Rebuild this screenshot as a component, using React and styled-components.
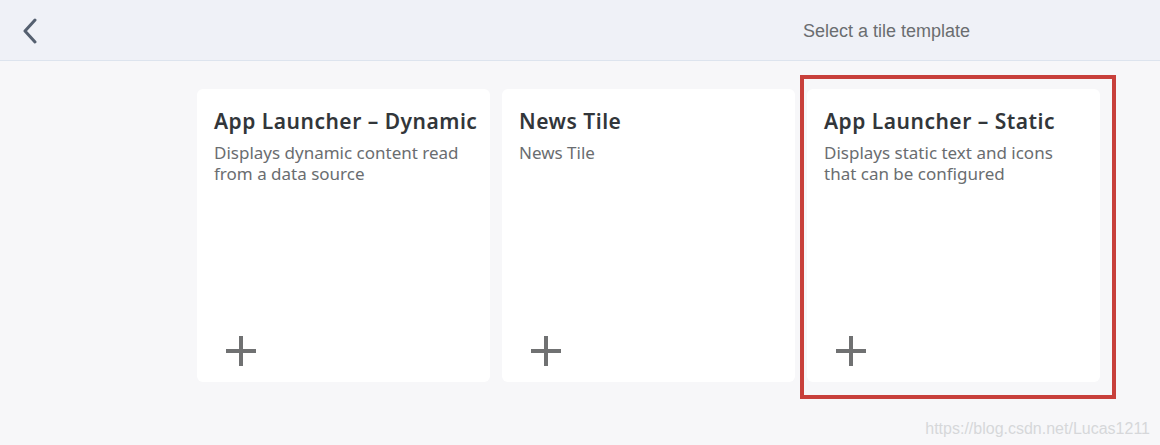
import React from 'react';
import styled, { createGlobalStyle } from 'styled-components';

const Global = createGlobalStyle`
  html, body {
    margin: 0;
    padding: 0;
    background: #f7f7f9;
  }
  body {
    font-family: 'Noto Sans', 'Open Sans', sans-serif;
  }
`;

const Page = styled.div`
  width: 1160px;
  height: 445px;
  display: flex;
  flex-direction: column;
  background: #f7f7f9;
  position: relative;
  overflow: hidden;
`;

const Header = styled.header`
  height: 61px;
  flex-shrink: 0;
  display: flex;
  align-items: center;
  background: #eff1f7;
  border-bottom: 1px solid #dde4ee;
  box-sizing: border-box;
`;

const BackButton = styled.button`
  width: 58px;
  height: 60px;
  border: none;
  background: transparent;
  display: flex;
  align-items: center;
  justify-content: center;
  padding: 2px 0 0 2px;
  cursor: default;
`;

const HeaderTitle = styled.div`
  margin-left: 745px;
  font-family: 'Liberation Sans', Arial, sans-serif;
  font-size: 18px;
  color: #6a6d70;
  padding-top: 2px;
`;

const Tiles = styled.div`
  display: flex;
  gap: 12px;
  padding: 28px 0 0 197px;
`;

const TileWrap = styled.div`
  position: relative;
`;

const Tile = styled.div`
  width: 293px;
  height: 293px;
  box-sizing: border-box;
  background: #fff;
  border-radius: 6px;
  padding: 18px 10px 14px 17px;
  display: flex;
  flex-direction: column;
`;

const Title = styled.div`
  font-size: 21px;
  font-weight: 600;
  color: #32363a;
  line-height: 28px;
  white-space: nowrap;
  letter-spacing: 0.5px;
`;

const Desc = styled.div`
  margin-top: 7px;
  font-size: 17px;
  line-height: 21px;
  color: #6a6d70;
  padding-right: 20px;
`;

const AddIcon = styled.div`
  margin-top: auto;
  margin-left: 12px;
  margin-bottom: 2px;
  width: 30px;
  height: 30px;
`;

const Highlight = styled.div`
  position: absolute;
  left: -7px;
  top: -14px;
  right: -16px;
  bottom: -17px;
  border: 4px solid #c8403b;
  pointer-events: none;
`;

const Watermark = styled.div`
  position: absolute;
  right: 10px;
  bottom: 7px;
  font-family: 'Liberation Sans', Arial, sans-serif;
  font-size: 16px;
  color: #d6d7da;
`;

const tiles = [
  { title: 'App Launcher – Dynamic', desc: 'Displays dynamic content read from a data source' },
  { title: 'News Tile', desc: 'News Tile' },
  { title: 'App Launcher – Static', desc: 'Displays static text and icons that can be configured', selected: true },
];

function Plus() {
  return (
    <svg width="30" height="30" viewBox="0 0 30 30">
      <path d="M15 0v30M0 15h30" stroke="#707172" strokeWidth="4" fill="none" />
    </svg>
  );
}

export default function App() {
  return (
    <Page>
      <Global />
      <Header>
        <BackButton aria-label="Back">
          <svg width="16" height="26" viewBox="0 0 16 26">
            <path d="M13 2L3 13l10 11" stroke="#556070" strokeWidth="3" fill="none" strokeLinecap="round" strokeLinejoin="round" />
          </svg>
        </BackButton>
        <HeaderTitle>Select a tile template</HeaderTitle>
      </Header>
      <Tiles>
        {tiles.map((t) => (
          <TileWrap key={t.title}>
            <Tile>
              <Title>{t.title}</Title>
              <Desc>{t.desc}</Desc>
              <AddIcon><Plus /></AddIcon>
            </Tile>
            {t.selected && <Highlight />}
          </TileWrap>
        ))}
      </Tiles>
      <Watermark>https://blog.csdn.net/Lucas1211</Watermark>
    </Page>
  );
}
